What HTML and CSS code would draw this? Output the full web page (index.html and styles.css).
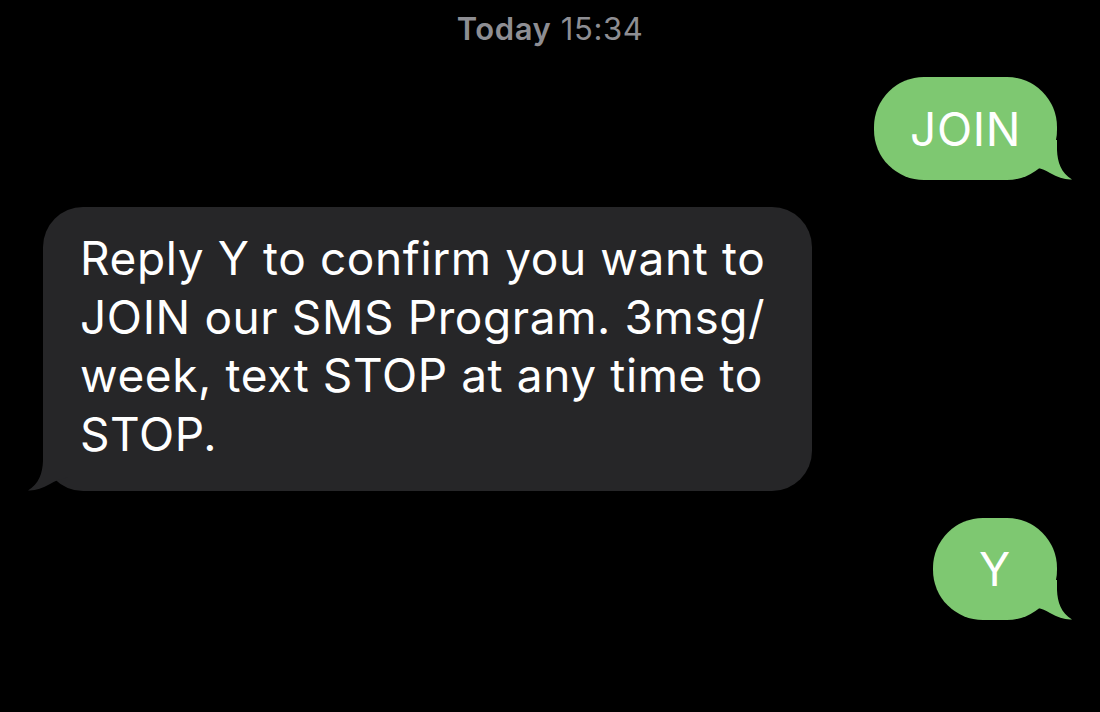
FILE: index.html
```html
<!DOCTYPE html>
<html>
<head>
<meta charset="utf-8">
<link rel="stylesheet" href="styles.css">
</head>
<body>
<div class="thread">
  <div class="stamp"><span class="day">Today</span> 15:34</div>
  <div class="row out">
    <div class="bubble sent join">JOIN
      <svg class="tail tail-r" viewBox="0 0 40 40" width="40" height="40"><path d="M0 0 H25 V10 C25.5 22 29 33 40 39.5 C33 40 26 37.5 18 33 C13 30 9 28.5 5 28 L0 26 Z"/></svg>
    </div>
  </div>
  <div class="row in">
    <div class="bubble recv">Reply Y to confirm you want to<br>JOIN our SMS Program. 3msg/<br>week, text STOP at any time to<br>STOP.
      <svg class="tail tail-l" viewBox="0 0 40 40" width="40" height="40"><path d="M0 0 H25 V10 C25.5 22 29 33 40 39.5 C33 40 26 37.5 18 33 C13 30 9 28.5 5 28 L0 26 Z"/></svg>
    </div>
  </div>
  <div class="row out">
    <div class="bubble sent y">Y
      <svg class="tail tail-r" viewBox="0 0 40 40" width="40" height="40"><path d="M0 0 H25 V10 C25.5 22 29 33 40 39.5 C33 40 26 37.5 18 33 C13 30 9 28.5 5 28 L0 26 Z"/></svg>
    </div>
  </div>
</div>
</body>
</html>
```
FILE: styles.css
```css
html, body {
  margin: 0;
  padding: 0;
  background: #000;
}
body {
  width: 1100px;
  height: 712px;
  overflow: hidden;
  font-family: Inter, "Noto Sans", sans-serif;
}
.thread {
  display: flex;
  flex-direction: column;
  padding: 0 43px;
  gap: 27px;
}
.stamp {
  text-align: center;
  color: #8e8e93;
  font-size: 31px;
  line-height: 36px;
  padding-top: 11px;
  margin-bottom: 3px;
  letter-spacing: 0.6px;
}
.day {
  font-weight: 600;
}
.row {
  display: flex;
}
.row.out {
  justify-content: flex-end;
}
.row.in {
  justify-content: flex-start;
}
.bubble {
  position: relative;
  color: #fff;
  font-size: 46px;
  letter-spacing: 0.6px;
}
.sent {
  background: #7ec871;
  fill: #7ec871;
  border-radius: 50px;
  height: 103px;
  display: flex;
  align-items: center;
  justify-content: center;
}
.join {
  width: 183px;
}
.y {
  width: 124px;
  height: 102px;
}
.recv {
  background: #262628;
  fill: #262628;
  border-radius: 40px;
  width: 769px;
  box-sizing: border-box;
  padding: 22px 20px 28px 37px;
  line-height: 58.5px;
}
.tail {
  position: absolute;
  bottom: 0;
  display: block;
}
.tail-r {
  right: -15px;
}
.tail-l {
  left: -15px;
  transform: scaleX(-1);
}
```
